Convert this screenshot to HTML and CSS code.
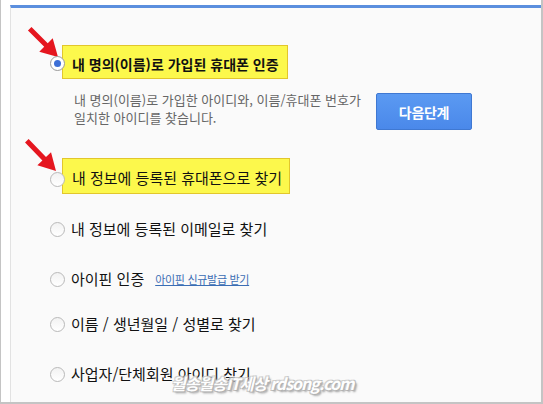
FILE: index.html
```html
<!DOCTYPE html>
<html lang="ko">
<head>
  <meta charset="UTF-8" />
  <title>아이디 찾기</title>
  <meta name="viewport" content="width=device-width, initial-scale=1.0" />
  <link rel="stylesheet" href="styles.css">
</head>
<body>
  <div class="frame">
    <div class="panel">
      <div class="opt first">
        <span class="radio checked"></span>
        <span class="label mark strong">내 명의(이름)로 가입된 휴대폰 인증</span>
      </div>
      <div class="desc">
        <p>내 명의(이름)로 가입한 아이디와, 이름/휴대폰 번호가<br>일치한 아이디를 찾습니다.</p>
        <button class="next">다음단계</button>
      </div>
      <div class="opt second">
        <span class="radio"></span>
        <span class="label mark">내 정보에 등록된 휴대폰으로 찾기</span>
      </div>
      <div class="opt">
        <span class="radio"></span>
        <span class="label">내 정보에 등록된 이메일로 찾기</span>
      </div>
      <div class="opt">
        <span class="radio"></span>
        <span class="label">아이핀 인증</span>
        <a class="link" href="#">아이핀 신규발급 받기</a>
      </div>
      <div class="opt tight">
        <span class="radio"></span>
        <span class="label">이름 / 생년월일 / 성별로 찾기</span>
      </div>
      <div class="opt">
        <span class="radio"></span>
        <span class="label">사업자/단체회원 아이디 찾기</span>
      </div>
    </div>

    <!-- annotation arrows -->
    <svg class="arrows" width="543" height="404" viewBox="0 0 543 404">
      <g transform="translate(57 57) rotate(45)">
        <polygon points="-40,-2.5 -17,-2.5 -17,-9.5 0,0 -17,9.5 -17,2.5 -40,2.5" fill="#e5161f" />
      </g>
      <g transform="translate(55 171) rotate(46)">
        <polygon points="-42,-2.5 -17,-2.5 -17,-9.5 0,0 -17,9.5 -17,2.5 -42,2.5" fill="#e5161f" />
      </g>
    </svg>

    <div class="watermark">월송월송IT세상 rdsong.com</div>
  </div>
</body>
</html>
```

FILE: styles.css
```css
body {
  margin: 0;
  background: #fff;
  font-family: "Noto Sans CJK KR", "Noto Sans", sans-serif;
  color: #111;
}

.frame {
  position: relative;
  width: 543px;
  height: 404px;
  box-sizing: border-box;
  padding: 5px 0 0 9px;
  border-left: 1px solid #c4c4c4;
  border-right: 2px solid #c4c4c4;
  border-bottom: 2px solid #c4c4c4;
  background: #fff;
  overflow: hidden;
  display: flex;
}

.panel {
  flex: 1;
  display: flex;
  flex-direction: column;
  padding: 40px 0 0 39px;
  border-top: 3px solid #5b8fde;
  border-left: 1px solid #e2e2e2;
  background: #fafafa;
}

.opt {
  display: flex;
  align-items: center;
  height: 34px;
  margin-top: 16px;
}

.opt.first { margin-top: 0; }
.opt.second { margin-top: 32px; }
.opt.tight { margin-top: 11px; }

.radio {
  position: relative;
  z-index: 1;
  width: 15px;
  height: 15px;
  flex: none;
  border: 1px solid #b9b9b9;
  border-radius: 50%;
  background: linear-gradient(#f2f2f2, #fff);
  box-sizing: border-box;
}

.first .radio {
  margin-top: -3px;
  border-color: #9a9a9a;
  background: #fff;
}

.radio.checked::after {
  content: "";
  position: absolute;
  left: 3px;
  top: 3px;
  width: 7px;
  height: 7px;
  border-radius: 50%;
  background: #3d6fd6;
}

.label {
  font-size: 15px;
  line-height: 20px;
  padding-left: 6px;
  white-space: nowrap;
}

.label.mark {
  margin-left: -3px;
  padding: 8px 8px 4px 9px;
  margin-bottom: 6px;
  background: #fcf84c;
  border: 1px solid #e2c62c;
}

.second .label.mark {
  padding: 9px 7px 5px 9px;
}

.label.strong {
  font-size: 14px;
  font-weight: bold;
  letter-spacing: 0;
}

.link {
  margin-left: 11px;
  font-size: 11px;
  letter-spacing: -0.3px;
  color: #3a6db4;
  text-decoration: underline;
}

.desc {
  display: flex;
  align-items: flex-start;
  margin: 11px 0 0 24px;
}

.desc p {
  margin: -2px 0 0;
  width: 302px;
  font-size: 13px;
  line-height: 18px;
  color: #666;
  white-space: nowrap;
}

.next {
  width: 96px;
  height: 37px;
  padding: 0;
  border: 1px solid #3f78d2;
  border-radius: 2px;
  background: linear-gradient(#5b9af2, #4a88ea);
  color: #fff;
  font-family: inherit;
  font-size: 14px;
  font-weight: bold;
  letter-spacing: -0.3px;
  cursor: pointer;
}

.arrows {
  position: absolute;
  left: 0;
  top: 0;
  pointer-events: none;
}

.watermark {
  position: absolute;
  left: 170px;
  top: 371px;
  font-size: 16px;
  font-weight: bold;
  font-style: italic;
  letter-spacing: -1px;
  color: #fff;
  text-shadow: 1px 1px 0 #aaa, -1px -1px 0 #ccc, 1px -1px 0 #bbb, -1px 1px 0 #bbb, 2px 2px 2px #999;
  opacity: 0.9;
  white-space: nowrap;
}
```
